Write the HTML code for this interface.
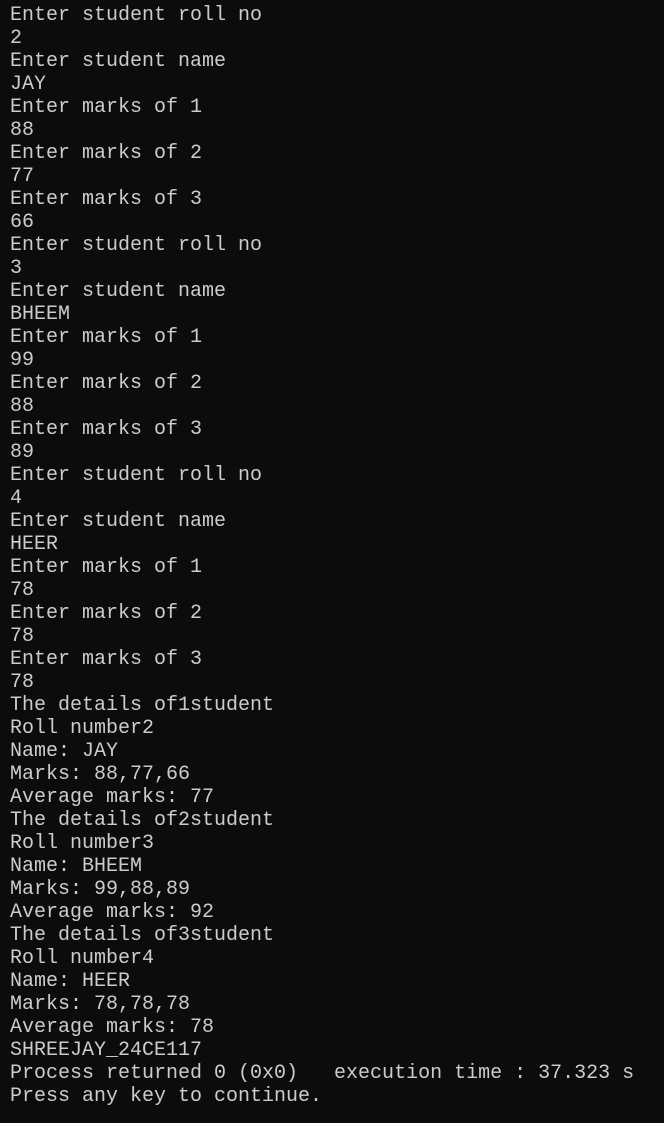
<!DOCTYPE html>
<html><head><meta charset="utf-8"><style>
html,body{margin:0;padding:0;background:#0c0c0c;width:664px;height:1123px;overflow:hidden}
pre{margin:0;position:absolute;left:10px;top:4px;font-family:"Liberation Mono","DejaVu Sans Mono",monospace;font-size:20px;line-height:23px;color:#cccccc;white-space:pre}
</style></head><body><pre>Enter student roll no
2
Enter student name
JAY
Enter marks of 1
88
Enter marks of 2
77
Enter marks of 3
66
Enter student roll no
3
Enter student name
BHEEM
Enter marks of 1
99
Enter marks of 2
88
Enter marks of 3
89
Enter student roll no
4
Enter student name
HEER
Enter marks of 1
78
Enter marks of 2
78
Enter marks of 3
78
The details of1student
Roll number2
Name: JAY
Marks: 88,77,66
Average marks: 77
The details of2student
Roll number3
Name: BHEEM
Marks: 99,88,89
Average marks: 92
The details of3student
Roll number4
Name: HEER
Marks: 78,78,78
Average marks: 78
SHREEJAY_24CE117
Process returned 0 (0x0)   execution time : 37.323 s
Press any key to continue.</pre></body></html>
